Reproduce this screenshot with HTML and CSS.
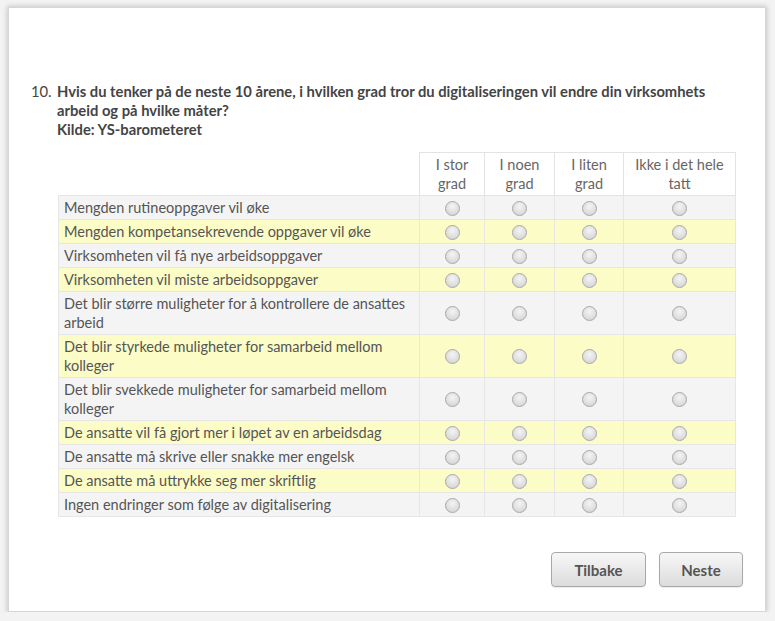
FILE: index.html
```html
<!DOCTYPE html>
<html lang="no">
<head>
<meta charset="utf-8">
<title>Spørsmål 10</title>
<link rel="stylesheet" href="styles.css">
</head>
<body>
<div class="panel">
  <div class="question">
    <span class="qnum">10.</span>
    <div class="qtext">Hvis du tenker på de neste 10 årene, i hvilken grad tror du digitaliseringen vil endre din virksomhets arbeid og på hvilke måter?<br>Kilde: YS-barometeret</div>
  </div>
  <table class="grid">
    <colgroup>
      <col class="c-label"><col class="c1"><col class="c2"><col class="c3"><col class="c4">
    </colgroup>
    <thead>
      <tr>
        <th class="blank"></th>
        <th>I stor grad</th>
        <th>I noen grad</th>
        <th>I liten grad</th>
        <th>Ikke i det hele tatt</th>
      </tr>
    </thead>
    <tbody>
      <tr class="odd"><td class="lbl">Mengden rutineoppgaver vil øke</td><td><span class="radio"></span></td><td><span class="radio"></span></td><td><span class="radio"></span></td><td><span class="radio"></span></td></tr>
      <tr class="even"><td class="lbl">Mengden kompetansekrevende oppgaver vil øke</td><td><span class="radio"></span></td><td><span class="radio"></span></td><td><span class="radio"></span></td><td><span class="radio"></span></td></tr>
      <tr class="odd"><td class="lbl">Virksomheten vil få nye arbeidsoppgaver</td><td><span class="radio"></span></td><td><span class="radio"></span></td><td><span class="radio"></span></td><td><span class="radio"></span></td></tr>
      <tr class="even"><td class="lbl">Virksomheten vil miste arbeidsoppgaver</td><td><span class="radio"></span></td><td><span class="radio"></span></td><td><span class="radio"></span></td><td><span class="radio"></span></td></tr>
      <tr class="odd"><td class="lbl">Det blir større muligheter for å kontrollere de ansattes arbeid</td><td><span class="radio"></span></td><td><span class="radio"></span></td><td><span class="radio"></span></td><td><span class="radio"></span></td></tr>
      <tr class="even"><td class="lbl">Det blir styrkede muligheter for samarbeid mellom kolleger</td><td><span class="radio"></span></td><td><span class="radio"></span></td><td><span class="radio"></span></td><td><span class="radio"></span></td></tr>
      <tr class="odd"><td class="lbl">Det blir svekkede muligheter for samarbeid mellom kolleger</td><td><span class="radio"></span></td><td><span class="radio"></span></td><td><span class="radio"></span></td><td><span class="radio"></span></td></tr>
      <tr class="even"><td class="lbl">De ansatte vil få gjort mer i løpet av en arbeidsdag</td><td><span class="radio"></span></td><td><span class="radio"></span></td><td><span class="radio"></span></td><td><span class="radio"></span></td></tr>
      <tr class="odd"><td class="lbl">De ansatte må skrive eller snakke mer engelsk</td><td><span class="radio"></span></td><td><span class="radio"></span></td><td><span class="radio"></span></td><td><span class="radio"></span></td></tr>
      <tr class="even"><td class="lbl">De ansatte må uttrykke seg mer skriftlig</td><td><span class="radio"></span></td><td><span class="radio"></span></td><td><span class="radio"></span></td><td><span class="radio"></span></td></tr>
      <tr class="odd"><td class="lbl">Ingen endringer som følge av digitalisering</td><td><span class="radio"></span></td><td><span class="radio"></span></td><td><span class="radio"></span></td><td><span class="radio"></span></td></tr>
    </tbody>
  </table>
  <div class="buttons">
    <button class="btn">Tilbake</button>
    <button class="btn">Neste</button>
  </div>
</div>
</body>
</html>
```
FILE: styles.css
```css
html, body {
  margin: 0;
  padding: 0;
}
body {
  background: #f3f3f3;
  padding: 7px 0 0 8px;
  font-family: "Lato", "Open Sans", sans-serif;
  color: #555;
}
.panel {
  box-sizing: border-box;
  width: 758px;
  height: 605px;
  background: #fff;
  border: 1px solid #d6d6d6;
  box-shadow: 0 0 5px 1px rgba(0, 0, 0, 0.18);
  padding: 74px 30px 0 22px;
}
.question {
  display: grid;
  grid-template-columns: 26px 1fr;
  font-size: 14.75px;
  line-height: 19px;
  font-weight: 700;
  color: #444;
}
.qnum {
  font-weight: 400;
}
.grid {
  margin: 13px 0 0 27px;
  width: 677px;
  table-layout: fixed;
  border-collapse: collapse;
  font-size: 14.5px;
  line-height: 19px;
}
.c-label { width: 361px; }
.c1 { width: 65px; }
.c2 { width: 70px; }
.c3 { width: 69px; }
.c4 { width: 112px; }
.grid th {
  font-weight: 400;
  color: #666;
  text-align: center;
  padding: 2px 4px 2px;
  border: 1px solid #e3e3e3;
  background: #fff;
}
.grid th.blank {
  border: none;
}
.grid td {
  border: 1px solid #e6e6e6;
  padding: 2px 0 2px;
  text-align: center;
  vertical-align: middle;
}
.grid td.lbl {
  text-align: left;
  padding-left: 5px;
  padding-right: 8px;
  color: #555;
}
.odd td { background: #f4f4f4; }
.even td { background: #fcfcc6; }
.radio {
  display: inline-block;
  box-sizing: border-box;
  width: 15px;
  height: 15px;
  border-radius: 50%;
  border: 1px solid #a9a9a9;
  background: radial-gradient(circle at 50% 35%, #f4f4f4 0%, #e0e0e0 55%, #cfcfcf 100%);
  vertical-align: middle;
  margin-top: -2px;
}
.buttons {
  display: flex;
  justify-content: flex-end;
  gap: 13px;
  margin-top: 35px;
  margin-right: -8px;
}
.btn {
  box-sizing: border-box;
  width: 95px;
  height: 35px;
  border: 1px solid #a8a8a8;
  border-radius: 4px;
  background: linear-gradient(#f7f7f7, #dcdcdc);
  font-family: "Lato", "Open Sans", sans-serif;
  font-size: 15px;
  font-weight: 700;
  color: #555;
  box-shadow: 0 1px 1px rgba(0, 0, 0, 0.08);
}
.btn + .btn {
  width: 84px;
}
```
